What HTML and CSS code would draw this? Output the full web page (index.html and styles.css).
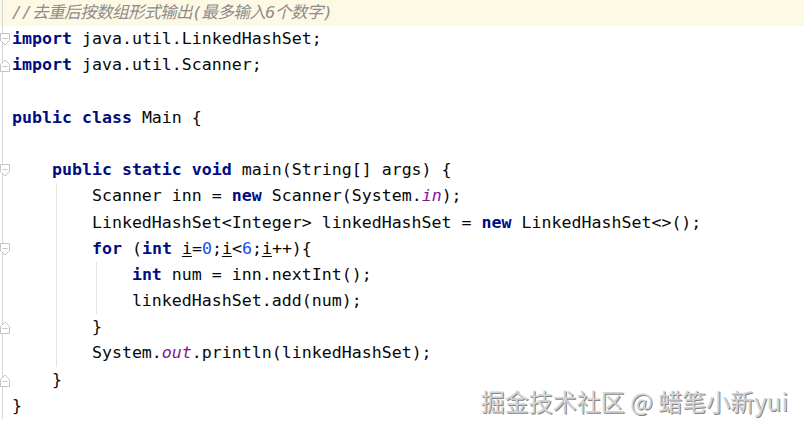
FILE: index.html
```html
<!DOCTYPE html>
<html>
<head>
<meta charset="utf-8">
<link rel="stylesheet" href="styles.css">
</head>
<body>
<div class="editor">
  <div class="row current"><div class="gut"></div><div class="code"><span class="cm">//<span class="cjk">去重后按数组形式输出(最多输入6个数字)</span></span></div></div>
  <div class="row"><div class="gut"><svg class="fold" width="11" height="13" viewBox="0 0 11 13"><path d="M0.5 0.5H9.5V7.5L5 12L0.5 7.5Z" fill="#fff" stroke="#c4c4c4"/><path d="M2.5 5.5H7.5" stroke="#c4c4c4"/></svg></div><div class="code"><span class="kw">import</span> java.util.LinkedHashSet;</div></div>
  <div class="row"><div class="gut"><svg class="fold" width="11" height="13" viewBox="0 0 11 13"><path d="M0.5 12.5H9.5V5.5L5 1L0.5 5.5Z" fill="#fff" stroke="#c4c4c4"/><path d="M2.5 7.5H7.5" stroke="#c4c4c4"/></svg></div><div class="code"><span class="kw">import</span> java.util.Scanner;</div></div>
  <div class="row"><div class="gut"></div><div class="code"></div></div>
  <div class="row"><div class="gut"></div><div class="code"><span class="kw">public class</span> Main {</div></div>
  <div class="row"><div class="gut"></div><div class="code"></div></div>
  <div class="row"><div class="gut"><svg class="fold" width="11" height="13" viewBox="0 0 11 13"><path d="M0.5 0.5H9.5V7.5L5 12L0.5 7.5Z" fill="#fff" stroke="#c4c4c4"/><path d="M2.5 5.5H7.5" stroke="#c4c4c4"/></svg></div><div class="code">    <span class="kw">public static void</span> main(String[] args) {</div></div>
  <div class="row"><div class="gut"></div><div class="code g1">        Scanner inn = <span class="kw">new</span> Scanner(System.<span class="st">in</span>);</div></div>
  <div class="row"><div class="gut"></div><div class="code g1">        LinkedHashSet&lt;Integer&gt; linkedHashSet = <span class="kw">new</span> LinkedHashSet&lt;&gt;();</div></div>
  <div class="row"><div class="gut"><svg class="fold" width="11" height="13" viewBox="0 0 11 13"><path d="M0.5 0.5H9.5V7.5L5 12L0.5 7.5Z" fill="#fff" stroke="#c4c4c4"/><path d="M2.5 5.5H7.5" stroke="#c4c4c4"/></svg></div><div class="code g1">        <span class="kw">for</span> (<span class="kw">int</span> <span class="uv">i</span>=<span class="num">0</span>;<span class="uv">i</span>&lt;<span class="num">6</span>;<span class="uv">i</span>++){</div></div>
  <div class="row"><div class="gut"></div><div class="code g2">            <span class="kw">int</span> num = inn.nextInt();</div></div>
  <div class="row"><div class="gut"></div><div class="code g2">            linkedHashSet.add(num);</div></div>
  <div class="row"><div class="gut"><svg class="fold" width="11" height="13" viewBox="0 0 11 13"><path d="M0.5 12.5H9.5V5.5L5 1L0.5 5.5Z" fill="#fff" stroke="#c4c4c4"/><path d="M2.5 7.5H7.5" stroke="#c4c4c4"/></svg></div><div class="code g1">        }</div></div>
  <div class="row"><div class="gut"></div><div class="code g1">        System.<span class="st">out</span>.println(linkedHashSet);</div></div>
  <div class="row"><div class="gut"><svg class="fold" width="11" height="13" viewBox="0 0 11 13"><path d="M0.5 12.5H9.5V5.5L5 1L0.5 5.5Z" fill="#fff" stroke="#c4c4c4"/><path d="M2.5 7.5H7.5" stroke="#c4c4c4"/></svg></div><div class="code">    }</div></div>
  <div class="row"><div class="gut"></div><div class="code">}</div></div>
</div>
<div class="watermark">掘金技术社区 @ 蜡笔小新yui</div>
</body>
</html>
```

FILE: styles.css
```css
html, body {
  margin: 0;
  padding: 0;
  background: #ffffff;
}
body {
  width: 804px;
  height: 426px;
  overflow: hidden;
  position: relative;
}
.editor {
  display: flex;
  flex-direction: column;
  font-family: "DejaVu Sans Mono", "Noto Sans CJK SC", monospace;
  font-size: 16.6px;
  color: #080808;
}
.row {
  display: flex;
  height: 26.2px;
  line-height: 26.2px;
}
.row.current {
  background: #fdf9e4;
}
.gut {
  width: 7px;
  margin-left: 2px;
  border-left: 1px solid #d6d6d6;
  position: relative;
  flex: none;
}
.fold {
  position: absolute;
  left: -3px;
  top: 7px;
}
.code {
  white-space: pre;
  flex: 1;
  padding-left: 2px;
}
.g1 {
  background-image: linear-gradient(#e2e2e2, #e2e2e2);
  background-repeat: no-repeat;
  background-size: 1px 100%;
  background-position: calc(2px + 4.5ch - 0.5px) 0;
}
.g2 {
  background-image: linear-gradient(#e2e2e2, #e2e2e2), linear-gradient(#e2e2e2, #e2e2e2);
  background-repeat: no-repeat, no-repeat;
  background-size: 1px 100%, 1px 100%;
  background-position: calc(2px + 4.5ch - 0.5px) 0, calc(2px + 8.5ch - 0.5px) 0;
}
.kw {
  color: #000c80;
  font-weight: bold;
}
.cm {
  color: #8c8c8c;
  font-style: italic;
}
.cjk {
  letter-spacing: -0.6px;
}
.num {
  color: #1750eb;
}
.st {
  color: #871094;
  font-style: italic;
}
.uv {
  text-decoration: underline;
  text-underline-offset: 2px;
}
.watermark {
  position: absolute;
  right: 16px;
  bottom: 10px;
  font-family: "Noto Sans CJK SC", sans-serif;
  font-size: 24px;
  line-height: 30px;
  color: #d2d2d2;
  text-shadow: 1px 1px 0 #858585;
  white-space: nowrap;
}
```
